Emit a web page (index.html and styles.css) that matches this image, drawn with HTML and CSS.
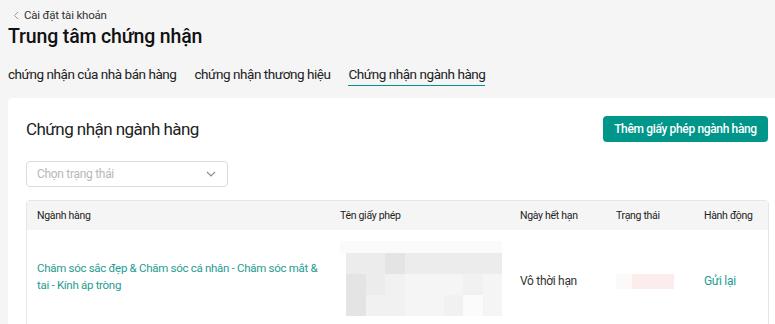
FILE: index.html
```html
<!DOCTYPE html>
<html lang="vi">
<head>
<meta charset="utf-8">
<link rel="stylesheet" href="styles.css">
</head>
<body>
<div class="page">
  <a class="back"><svg class="back-ico" width="6" height="9" viewBox="0 0 6 9"><path d="M5 1 L1.5 4.5 L5 8" fill="none" stroke="#999" stroke-width="1"/></svg><span>Cài đặt tài khoản</span></a>
  <h1 class="title">Trung tâm chứng nhận</h1>
  <nav class="tabs">
    <span class="tab">chứng nhận của nhà bán hàng</span>
    <span class="tab">chứng nhận thương hiệu</span>
    <span class="tab active">Chứng nhận ngành hàng</span>
  </nav>
  <section class="card">
    <div class="card-head">
      <h2 class="card-title">Chứng nhận ngành hàng</h2>
      <button class="btn">Thêm giấy phép ngành hàng</button>
    </div>
    <div class="select">
      <span class="placeholder">Chọn trạng thái</span>
      <svg width="10" height="6" viewBox="0 0 10 6"><path d="M1 1 L5 5 L9 1" fill="none" stroke="#8a8a8a" stroke-width="1.1"/></svg>
    </div>
    <table class="tbl">
      <colgroup><col class="c1"><col class="c2"><col class="c3"><col class="c4"><col class="c5"></colgroup>
      <thead>
        <tr><th>Ngành hàng</th><th>Tên giấy phép</th><th>Ngày hết hạn</th><th>Trạng thái</th><th>Hành động</th></tr>
      </thead>
      <tbody>
        <tr>
          <td class="cat">Chăm sóc sắc đẹp &amp; Chăm sóc cá nhân - Chăm sóc mắt &amp; tai - Kính áp tròng</td>
          <td class="lic">
            <div class="mosaic">
              <div class="band"></div>
              <div class="grid">
                <i class="s3"></i><i class="s3"></i><i class="s4"></i><i class="s3"></i><i class="s3"></i><i class="s3"></i><i class="s3"></i><i class="s3"></i>
                <i class="s4"></i><i class="s3"></i><i class="s2"></i><i class="s1"></i><i class="s1"></i><i class="s1"></i><i class="s2"></i><i class="s1"></i>
                <i class="s4"></i><i class="s2"></i><i class="s2"></i><i class="s1"></i><i class="s1"></i><i class="s2"></i><i class="s0"></i><i class="s1"></i>
              </div>
            </div>
          </td>
          <td class="exp">Vô thời hạn</td>
          <td><div class="status"><i class="st-a"></i><i class="st-b"></i></div></td>
          <td><a class="link">Gửi lại</a></td>
        </tr>
      </tbody>
    </table>
  </section>
</div>
</body>
</html>
```

FILE: styles.css
```css
* { box-sizing: border-box; }
html, body { margin: 0; padding: 0; }
body {
  background: #f5f5f5;
  font-family: Roboto, "Noto Sans", sans-serif;
  color: #222;
  overflow: hidden;
}
.page {
  padding: 8px 0 0 8px;
}
.back {
  display: flex;
  align-items: center;
  gap: 5px;
  padding-left: 5px;
  font-size: 11.5px;
  letter-spacing: -0.2px;
  color: #333;
  height: 14px;
}
.back-ico { display: block; }
.title {
  margin: 2px 0 0;
  font-size: 19.5px;
  font-weight: 500;
  line-height: 26px;
  letter-spacing: -0.15px;
  color: #111;
}
.tabs {
  display: flex;
  gap: 18px;
  margin-top: 15px;
  height: 33px;
}
.tab {
  font-size: 13.5px;
  letter-spacing: -0.45px;
  color: #222;
  line-height: 18px;
  height: 21px;
}
.tab.active {
  border-bottom: 1.5px solid #00968a;
}
.card {
  background: #fff;
  border-radius: 4px 0 0 0;
  padding: 18px 7px 0 18px;
  height: 240px;
}
.card-head {
  display: flex;
  justify-content: space-between;
  align-items: center;
}
.card-title {
  margin: 0;
  font-size: 17px;
  font-weight: 400;
  letter-spacing: -0.55px;
  color: #222;
  line-height: 22px;
}
.btn {
  background: #00968a;
  color: #fff;
  border: 0;
  border-radius: 4px;
  height: 26px;
  width: 165px;
  font-family: inherit;
  font-size: 12px;
  font-weight: 500;
  letter-spacing: -0.35px;
  padding: 0;
}
.select {
  margin-top: 19px;
  width: 202px;
  height: 26px;
  border: 1px solid #dcdcdc;
  border-radius: 4px;
  display: flex;
  align-items: center;
  justify-content: space-between;
  padding: 0 11px 0 10px;
}
.placeholder {
  font-size: 12px;
  letter-spacing: -0.3px;
  color: #b8b8b8;
}
.tbl {
  margin-top: 13px;
  width: 742px;
  border-collapse: separate;
  border-spacing: 0;
  table-layout: fixed;
  border: 1px solid #e6e6e6;
  border-radius: 4px 4px 0 0;
}
.c1 { width: 303px; }
.c2 { width: 180px; }
.c3 { width: 96px; }
.c4 { width: 88px; }
.c5 { width: 74px; }
.tbl th {
  background: #f5f5f5;
  font-weight: 400;
  text-align: left;
  height: 29px;
  padding: 0 10px;
  color: #222;
  font-size: 10.5px;
  letter-spacing: -0.3px;
  white-space: nowrap;
}
.tbl td {
  padding: 0 10px;
  height: 100px;
  vertical-align: middle;
  color: #333;
  font-size: 12px;
  letter-spacing: -0.3px;
}
.tbl td.cat {
  color: #1f9c91;
  font-size: 11.5px;
  letter-spacing: -0.3px;
  line-height: 17.5px;
  padding: 0 6px 6px 10px;
}
.tbl td.exp { padding-top: 2px; }
.tbl td.lic {
  vertical-align: top;
  padding-top: 11px;
}
.mosaic { width: 162px; }
.band { height: 12px; background: #fafafa; }
.grid {
  display: grid;
  grid-template-columns: repeat(8, 1fr);
  grid-auto-rows: 21px;
  margin-left: 6px;
  width: 156px;
}
.grid i { display: block; }
.s0 { background: #fbfbfb; }
.s1 { background: #f5f5f5; }
.s2 { background: #f1f1f1; }
.s3 { background: #ececec; }
.s4 { background: #e4e4e4; }
.status {
  display: flex;
  height: 15px;
  width: 58px;
  margin-top: 2px;
}
.st-a { width: 16px; background: #fcf9f9; }
.st-b { flex: 1; background: #fcecec; }
.link {
  color: #1f9c91;
  font-size: 12px;
}
.tbl td:last-child { padding-top: 2px; }
```
